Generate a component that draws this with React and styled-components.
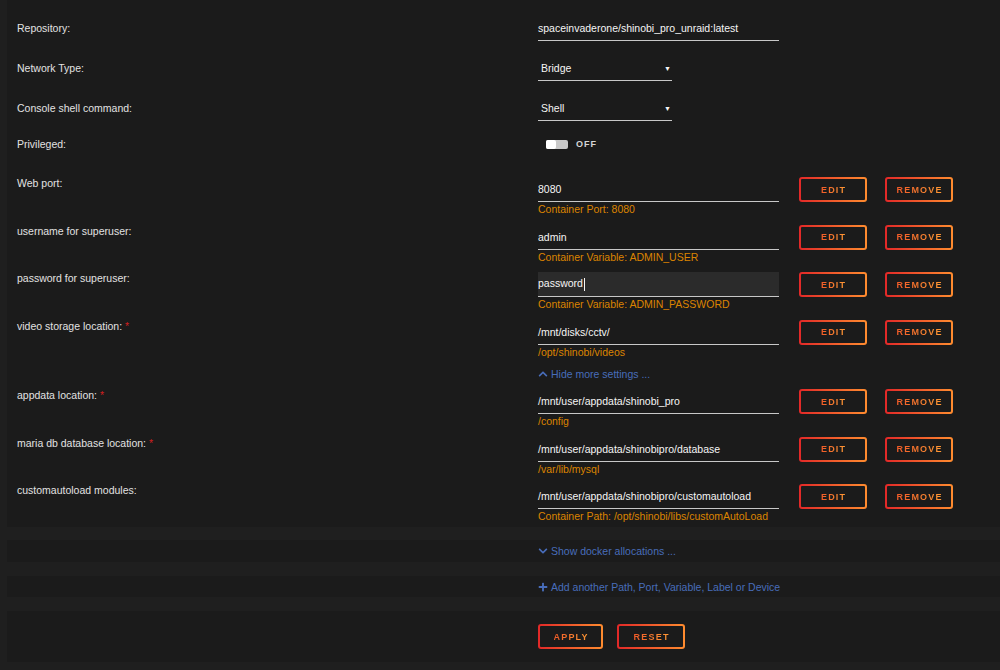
import React from 'react';
import styled, { createGlobalStyle } from 'styled-components';
import { FaChevronUp, FaChevronDown, FaPlus } from 'react-icons/fa';

const GlobalStyle = createGlobalStyle`
  html, body {
    margin: 0;
    padding: 0;
    background: #1f1f1f;
  }
  body {
    font-family: "Liberation Sans", Arial, sans-serif;
    color: #e0e0e0;
  }
`;

const Page = styled.div`
  width: 1000px;
  height: 670px;
  padding-left: 7px;
  box-sizing: border-box;
  display: flex;
  flex-direction: column;
  overflow: hidden;
`;

const Block = styled.div`
  background: #1b1b1b;
  display: flex;
  flex-direction: column;
  padding: ${p => p.pad || '0'};
  margin-top: ${p => p.mt || 0}px;
  height: ${p => (p.h ? `${p.h}px` : 'auto')};
  justify-content: ${p => (p.center ? 'center' : 'flex-start')};
  box-sizing: border-box;
`;

const Row = styled.div`
  display: flex;
  align-items: flex-start;
  height: ${p => p.h}px;
  margin-bottom: ${p => p.mb || 0}px;
  padding-left: 10px;
  flex-shrink: 0;
`;

const Label = styled.div`
  width: 521px;
  flex-shrink: 0;
  font-size: 10.5px;
  line-height: 13px;
  color: #e2e2e2;
  padding-top: ${p => p.top || 0}px;
`;

const Required = styled.span`
  color: #d21f1f;
`;

const Field = styled.div`
  width: 241px;
  flex-shrink: 0;
  display: flex;
  flex-direction: column;
`;

const TextBox = styled.div`
  height: 25px;
  width: ${p => p.w || 241}px;
  box-sizing: border-box;
  border-bottom: 1px solid #c8c8c8;
  background: ${p => (p.active ? '#2b2b2b' : 'transparent')};
  display: flex;
  align-items: center;
  padding-left: ${p => p.pl || 0}px;
  padding-right: ${p => (p.pl ? 1 : 8)}px;
  font-size: 10.5px;
  color: #f5f5f5;
  justify-content: space-between;
`;

const Caret = styled.span`
  display: inline-block;
  width: 1px;
  height: 13px;
  background: #f5f5f5;
  vertical-align: middle;
  margin-left: 1px;
`;

const Arrow = styled.span`
  font-size: 7px;
  color: #f5f5f5;
`;

const Hint = styled.div`
  font-size: 10.5px;
  line-height: 14px;
  color: #db8400;
`;

const Actions = styled.div`
  display: flex;
  gap: 18px;
  margin-left: 20px;
`;

const GradButton = styled.button`
  width: ${p => p.w || 68}px;
  height: 25px;
  padding: 0;
  border: 2px solid transparent;
  border-radius: 3px;
  background:
    linear-gradient(#1b1b1b, #1b1b1b) padding-box,
    linear-gradient(90deg, #e22828 0, #ff8c2f 100%) border-box;
  cursor: pointer;
  display: flex;
  align-items: center;
  justify-content: center;
`;

const ButtonText = styled.span`
  font-family: "Liberation Sans", Arial, sans-serif;
  font-weight: bold;
  font-size: 9px;
  letter-spacing: 1.2px;
  margin-right: -1.2px;
  text-transform: uppercase;
  background: linear-gradient(90deg, #f05a28 0, #ff9a35 100%);
  -webkit-background-clip: text;
  background-clip: text;
  color: transparent;
`;

const Toggle = styled.div`
  display: flex;
  align-items: center;
  gap: 8px;
  margin-left: 8px;
  margin-top: 3px;
`;

const Track = styled.div`
  width: 22px;
  height: 9px;
  border-radius: 2px;
  background: #c9c9c9;
  display: flex;
`;

const Knob = styled.div`
  width: 10px;
  height: 9px;
  border-radius: 2px;
  background: #ffffff;
`;

const ToggleText = styled.span`
  font-size: 9px;
  font-weight: bold;
  letter-spacing: 1px;
  color: #d6d6d6;
`;

const LinkRow = styled.div`
  padding-left: 531px;
  height: ${p => p.h || 14}px;
  margin-bottom: ${p => p.mb || 0}px;
  margin-top: ${p => p.mt || 0}px;
  display: flex;
  align-items: center;
  flex-shrink: 0;
`;

const Link = styled.a`
  color: #486dba;
  font-size: 10.5px;
  text-decoration: none;
  display: flex;
  align-items: center;
  gap: 3px;
  cursor: pointer;

  svg {
    font-size: 10px;
  }
`;

const ButtonBar = styled.div`
  padding-left: 531px;
  display: flex;
  gap: 14px;
`;

const simpleRows = [
  { label: 'Repository:', value: 'spaceinvaderone/shinobi_pro_unraid:latest' },
  { label: 'Network Type:', value: 'Bridge', select: true },
  { label: 'Console shell command:', value: 'Shell', select: true },
];

const firstFields = [
  { label: 'Web port:', value: '8080', hint: 'Container Port: 8080' },
  { label: 'username for superuser:', value: 'admin', hint: 'Container Variable: ADMIN_USER' },
  { label: 'password for superuser:', value: 'password', hint: 'Container Variable: ADMIN_PASSWORD', active: true },
  { label: 'video storage location:', value: '/mnt/disks/cctv/', hint: '/opt/shinobi/videos', required: true },
];

const moreFields = [
  { label: 'appdata location:', value: '/mnt/user/appdata/shinobi_pro', hint: '/config', required: true },
  { label: 'maria db database location:', value: '/mnt/user/appdata/shinobipro/database', hint: '/var/lib/mysql', required: true },
  { label: 'customautoload modules:', value: '/mnt/user/appdata/shinobipro/customautoload', hint: 'Container Path: /opt/shinobi/libs/customAutoLoad' },
];

const FieldRow = ({ field, mb }) => (
  <Row h={39} mb={mb}>
    <Label>
      {field.label}
      {field.required && <Required> *</Required>}
    </Label>
    <Field>
      <TextBox active={field.active}>
        <span>
          {field.value}
          {field.active && <Caret />}
        </span>
      </TextBox>
      <Hint>{field.hint}</Hint>
    </Field>
    <Actions>
      <GradButton><ButtonText>Edit</ButtonText></GradButton>
      <GradButton><ButtonText>Remove</ButtonText></GradButton>
    </Actions>
  </Row>
);

export default function App() {
  return (
    <Page>
      <GlobalStyle />
      <Block pad="16px 0 4px 0">
        {simpleRows.map(r => (
          <Row h={40} key={r.label}>
            <Label top={6}>{r.label}</Label>
            {r.select ? (
              <TextBox w={134} pl={3}>
                <span>{r.value}</span>
                <Arrow>▼</Arrow>
              </TextBox>
            ) : (
              <TextBox>{r.value}</TextBox>
            )}
          </Row>
        ))}
        <Row h={41}>
          <Label top={2}>Privileged:</Label>
          <Toggle>
            <Track><Knob /></Track>
            <ToggleText>OFF</ToggleText>
          </Toggle>
        </Row>
        {firstFields.map((f, i) => (
          <FieldRow key={f.label} field={f} mb={i < firstFields.length - 1 ? 8.5 : 0} />
        ))}
        <LinkRow h={14} mt={8} mb={8.5}>
          <Link><FaChevronUp /> Hide more settings ...</Link>
        </LinkRow>
        {moreFields.map((f, i) => (
          <FieldRow key={f.label} field={f} mb={i < moreFields.length - 1 ? 8.5 : 0} />
        ))}
      </Block>
      <Block mt={13} h={22} center>
        <LinkRow>
          <Link><FaChevronDown /> Show docker allocations ...</Link>
        </LinkRow>
      </Block>
      <Block mt={14} h={21} center>
        <LinkRow>
          <Link><FaPlus /> Add another Path, Port, Variable, Label or Device</Link>
        </LinkRow>
      </Block>
      <Block mt={14} h={51} center>
        <ButtonBar>
          <GradButton w={65}><ButtonText>Apply</ButtonText></GradButton>
          <GradButton w={68}><ButtonText>Reset</ButtonText></GradButton>
        </ButtonBar>
      </Block>
    </Page>
  );
}
